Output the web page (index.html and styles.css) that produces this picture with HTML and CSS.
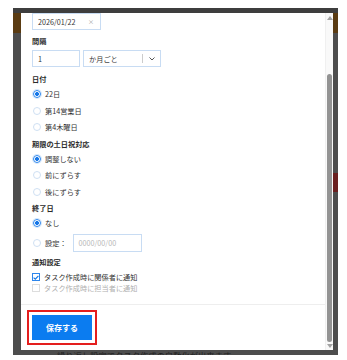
FILE: index.html
```html
<!DOCTYPE html>
<html lang="ja">

<head>
  <meta charset="UTF-8">
  <meta name="viewport" content="width=device-width, initial-scale=1.0">
  <title>繰り返し設定</title>
  <link rel="stylesheet" href="styles.css">
</head>

<body>
  <div class="page">
    <div class="overlay">
      <div class="modal">
        <div class="modal-main">
          <div class="modal-body">
            <div class="field field--date">
              <span>2026/01/22</span>
              <span class="clear">×</span>
            </div>

            <div class="label">間隔</div>
            <div class="interval">
              <div class="field field--num">1</div>
              <div class="field field--select">
                <span class="select-text">か月ごと</span>
                <span class="select-sep"></span>
                <svg class="chevron" width="6" height="4" viewBox="0 0 6 4">
                  <polyline points="0.5,0.5 3,3 5.5,0.5" fill="none" stroke="#555" stroke-width="1" />
                </svg>
              </div>
            </div>

            <div class="label">日付</div>
            <div class="option"><span class="radio radio--on"></span>22日</div>
            <div class="option"><span class="radio"></span>第14営業日</div>
            <div class="option"><span class="radio"></span>第4木曜日</div>

            <div class="label">期限の土日祝対応</div>
            <div class="option"><span class="radio radio--on"></span>調整しない</div>
            <div class="option"><span class="radio"></span>前にずらす</div>
            <div class="option"><span class="radio"></span>後にずらす</div>

            <div class="label">終了日</div>
            <div class="option"><span class="radio radio--on"></span>なし</div>
            <div class="option option--input"><span class="radio"></span>設定：
              <div class="field field--end">0000/00/00</div>
            </div>

            <div class="label label--notify">通知設定</div>
            <div class="check"><span class="box box--on">
                <svg width="6" height="5" viewBox="0 0 6 5">
                  <polyline points="0.6,2.6 2.3,4.1 5.4,0.8" fill="none" stroke="#1477e6" stroke-width="1.2" />
                </svg>
              </span>タスク作成時に関係者に通知</div>
            <div class="check check--off"><span class="box"></span>タスク作成時に担当者に通知</div>
          </div>

          <div class="modal-footer">
            <span class="highlight"><button class="btn">保存する</button></span>
          </div>
        </div>

        <div class="scrollbar">
          <span class="arrow arrow--up"></span>
          <span class="thumb"></span>
          <span class="arrow arrow--down"></span>
        </div>
      </div>
      <div class="behind">繰り返し設定でタスク作成の自動化が出来ます</div>
    </div>
  </div>
</body>

</html>
```

FILE: styles.css
```css
* {
  box-sizing: border-box;
}

body {
  margin: 0;
  background: #fff;
  font-family: "Noto Sans CJK JP", "Noto Sans", sans-serif;
  font-size: 7.2px;
  color: #333;
  overflow: hidden;
}

.page {
  padding: 8px 9px 0 13px;
}

.overlay {
  width: 325px;
  height: 347px;
  padding: 5px 5px 0 8px;
  background:
    linear-gradient(#5a3b12, #5a3b12) 0 5px / 8px 20px no-repeat,
    linear-gradient(#5a3b12, #5a3b12) 320px 5px / 5px 20px no-repeat,
    linear-gradient(#6a1f1f, #6a1f1f) 320px 165px / 5px 19px no-repeat,
    linear-gradient(#3e3e3e, #3e3e3e) 0 0 / 100% 5px no-repeat,
    #4d4d4d;
}

.modal {
  width: 312px;
  height: 337px;
  background: #fff;
  display: flex;
}

.modal-main {
  flex: 1;
  display: flex;
  flex-direction: column;
}

.modal-body {
  height: 291px;
  padding-left: 11px;
}

.field {
  display: flex;
  align-items: center;
  height: 17px;
  border: 1px solid #c8dcf3;
  padding-left: 5px;
  color: #333;
}

.field--date {
  width: 69px;
  justify-content: space-between;
  padding-right: 6px;
}

.clear {
  color: #9a9a9a;
  font-size: 6px;
}

.label {
  height: 12px;
  line-height: 12px;
  margin-top: 5px;
  font-weight: bold;
  color: #2b2b2b;
}

.interval {
  display: flex;
  gap: 3px;
  margin-top: 3px;
}

.field--num {
  width: 48px;
}

.field--select {
  width: 78px;
  padding-left: 5px;
}

.select-text {
  width: 53px;
}

.select-sep {
  width: 1px;
  height: 9px;
  background: #ccc;
}

.chevron {
  margin-left: 6px;
}

.interval + .label {
  margin-top: 6px;
}

.option {
  display: flex;
  align-items: center;
  height: 16.5px;
}

.label + .option {
  margin-top: 1px;
}

.option + .label {
  margin-top: 2px;
}

.radio {
  width: 8px;
  height: 8px;
  margin: 0 4px 0 1px;
  border: 1px solid #cfe0f3;
  border-radius: 50%;
  background: #fff;
}

.radio--on {
  border-color: #2d86ec;
  background: radial-gradient(circle, #1677e8 0 1.8px, #fff 2.2px);
  box-shadow: 0 0 0 1px #d6e8fb;
}

.option--input {
  height: 22px;
}

.field--end {
  width: 69px;
  height: 18px;
  margin-left: 6px;
  color: #b8b8b8;
}

.option + .label--notify {
  margin-top: 2.5px;
}

.check {
  display: flex;
  align-items: center;
  height: 11px;
}

.label + .check {
  margin-top: 3.5px;
}

.box {
  display: flex;
  align-items: center;
  justify-content: center;
  width: 8px;
  height: 8px;
  margin-right: 4px;
  border: 1px solid #ddd;
  background: #fff;
}

.box--on {
  border-color: #2d86ec;
}

.check--off {
  color: #b0b0b0;
}

.modal-footer {
  flex: 1;
  border-top: 1px solid #eee;
  padding: 5px 0 0 6px;
}

.highlight {
  display: inline-block;
  border: 2px solid #e41e1e;
  padding: 3px;
}

.btn {
  display: block;
  width: 60px;
  height: 25px;
  border: none;
  background: #0b7cf0;
  color: #fff;
  font-family: inherit;
  font-size: 8px;
  font-weight: bold;
}

.scrollbar {
  width: 8px;
  display: flex;
  flex-direction: column;
  align-items: center;
  background: #f9f9f9;
  border-left: 1px solid #f0f0f0;
  padding: 3px 0 2px;
}

.arrow {
  width: 0;
  height: 0;
  border-left: 3px solid transparent;
  border-right: 3px solid transparent;
}

.arrow--up {
  border-bottom: 4px solid #a3a3a3;
}

.arrow--down {
  border-top: 4px solid #a3a3a3;
}

.thumb {
  width: 5px;
  flex: 1;
  margin: 54px 0 2px;
  border-radius: 3px;
  background: #939393;
}

.behind {
  height: 5px;
  padding-left: 36px;
  font-size: 8.3px;
  line-height: 11px;
  color: #222;
  white-space: nowrap;
}
```
